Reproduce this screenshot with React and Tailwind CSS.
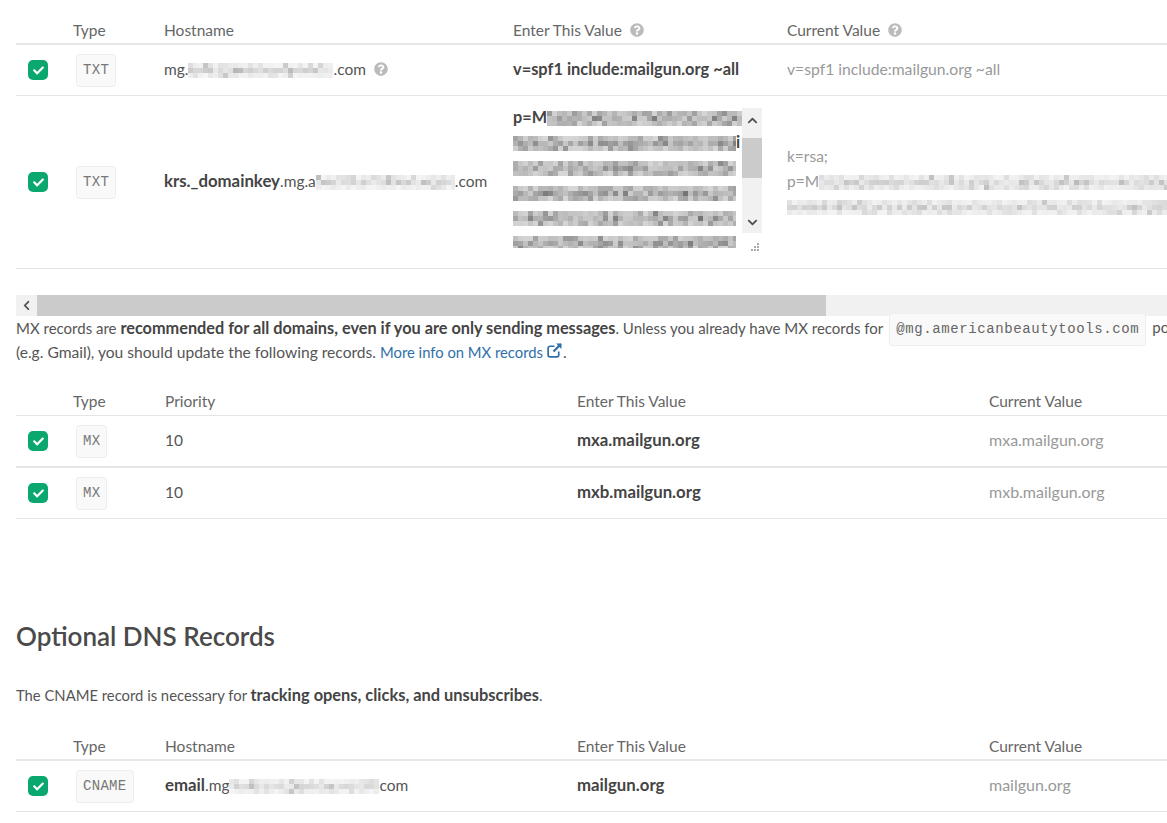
import React from "react";
import { FaCheck, FaQuestionCircle, FaChevronUp, FaChevronDown, FaChevronLeft } from "react-icons/fa";

function rng(seed) {
  let s = seed;
  return () => {
    s = (s * 16807) % 2147483647;
    return s / 2147483647;
  };
}

function Redact({ w, h = 15, seed = 7, min = 180, max = 240, cell = 5, edge = 0.5, className = "" }) {
  const r = rng(seed * 997 + 13);
  const cells = [];
  for (let y = 0; y < h; y += cell) {
    const mid = y === cell;
    for (let x = 0; x < w; x += cell) {
      const base = min + (max - min) * Math.sqrt(r());
      const spot = r() > 0.88;
      const v = Math.round(mid || spot ? base : 255 - (255 - base) * edge);
      cells.push(<rect key={x + "-" + y} x={x} y={y} width={cell} height={cell} fill={`rgb(${v},${v},${v})`} />);
    }
  }
  return (
    <svg width={w} height={h} className={"inline-block align-[-3px] blur-[0.6px] " + className}>
      {cells}
    </svg>
  );
}

function Check() {
  return (
    <span className="flex h-5 w-5 items-center justify-center rounded-[5px] bg-[#0aa86f] text-white">
      <FaCheck className="h-[11px] w-[11px]" />
    </span>
  );
}

function Badge({ children }) {
  return (
    <span className="ml-[3px] inline-flex h-[33px] items-center rounded-[3px] border border-[#eeeeee] bg-[#f9f9f9] px-[6px] font-['Liberation_Mono',monospace] text-[14px] tracking-[0.3px] text-[#777777]">
      {children}
    </span>
  );
}

function Help({ className = "ml-2" }) {
  return <FaQuestionCircle className={"inline-block h-[14px] w-[14px] align-[-1px] text-[#bbbbbb] " + className} />;
}

function ExternalIcon() {
  return (
    <svg viewBox="0 0 16 16" className="ml-[3px] inline-block h-[17px] w-[17px] align-[-1px]" fill="none" stroke="#2f6fa8" strokeWidth="1.6">
      <path d="M12 9v3.2a1.8 1.8 0 0 1-1.8 1.8H3.8A1.8 1.8 0 0 1 2 12.200V5.800A1.800 1.800 0 0 1 3.800 4H8" />
      <path d="M7 9l7-7" strokeWidth="2" />
      <path d="M9.500 1.500h5v5z" fill="#2f6fa8" stroke="none" />
    </svg>
  );
}

const cols5a = "grid grid-cols-[57px_91px_349px_274px_1fr]";
const cols5b = "grid grid-cols-[57px_92px_412px_412px_1fr]";
const bold = "font-bold text-[16.3px] text-[#444444]";
const boldCell = "font-bold text-[16.8px] text-[#444444]";

function Head({ cols, labels, heavy, h = "h-[45px]" }) {
  return (
    <div className={`${cols} ${h} items-end text-[#666666] ${heavy ? "border-b-2 border-[#e8e8e8]" : "border-b border-[#e5e5e5] pb-px"}`}>
      <span />
      {labels.map((l, i) => (
        <span key={i} className="whitespace-nowrap">{l}</span>
      ))}
    </div>
  );
}

function Row({ cols, cells, height = "h-[51px]", thick }) {
  return (
    <div className={`${cols} ${height} items-center ${thick ? "border-b-2 border-[#e5e5e5]" : "border-b border-[#e5e5e5]"}`}>
      {cells.map((c, i) => (
        <div key={i} className={i === 0 ? "pl-[12px]" : i === 1 ? "" : "pb-[2px]"}>{c}</div>
      ))}
    </div>
  );
}

function KeyBox() {
  const rows = [11, 23, 35, 47, 59];
  return (
    <div className="-mb-[2px] flex h-[148px] items-start">
      <div className="h-[140px] w-[229px] overflow-hidden">
        <div className={"-mt-1 leading-[25px] " + bold}>
          <div className="h-[25px] whitespace-nowrap">
            p=M<Redact w={196} seed={3} min={115} max={205} edge={0.8} />
          </div>
          {rows.map((s, i) => (
            <div key={s} className="h-[25px] whitespace-nowrap">
              <Redact w={223} seed={s} min={115} max={205} edge={0.8} />
              {i === 0 ? <span>i</span> : null}
            </div>
          ))}
        </div>
      </div>
      <div className="flex w-5 flex-col">
        <div className="flex h-[125px] w-5 flex-col items-center bg-[#f1f1f1] text-[#505050]">
          <div className="flex h-[30px] w-full items-center justify-center pb-[6px]">
            <FaChevronUp className="h-[11px] w-[11px]" />
          </div>
          <div className="h-[40px] w-full bg-[#cbcbcb]" />
          <div className="flex flex-1 items-end justify-center pb-[5px]">
            <FaChevronDown className="h-[11px] w-[11px]" />
          </div>
        </div>
        <svg width="12" height="10" className="mt-[10px] ml-[7px]" fill="#aaaaaa">
          <rect x="8" y="0" width="2" height="2" />
          <rect x="5" y="3" width="2" height="2" />
          <rect x="8" y="3" width="2" height="2" />
          <rect x="2" y="6" width="2" height="2" />
          <rect x="5" y="6" width="2" height="2" />
          <rect x="8" y="6" width="2" height="2" />
        </svg>
      </div>
    </div>
  );
}

export default function App() {
  return (
    <div className="h-[823px] w-full overflow-hidden bg-white pl-4 font-['Lato','Liberation_Sans',sans-serif] text-[15.5px] leading-[25px] text-[#555555]">
      <Head cols={cols5a} heavy labels={["Type", "Hostname", <>Enter This Value<Help /></>, <>Current Value<Help /></>]} />
      <Row
        cols={cols5a}
        cells={[
          <Check />,
          <Badge>TXT</Badge>,
          <span className="whitespace-nowrap">mg.<Redact w={145} seed={5} min={175} max={235} />.com<Help /></span>,
          <b className="text-[16.4px] font-bold text-[#444444]">v=spf1 include:mailgun.org ~all</b>,
          <span className="text-[15.7px] text-[#999999]">v=spf1 include:mailgun.org ~all</span>,
        ]}
      />
      <Row
        cols={cols5a}
        height="h-[173px]"
        cells={[
          <Check />,
          <Badge>TXT</Badge>,
          <span className="whitespace-nowrap"><b className={boldCell}>krs._domainkey</b>.mg.a<Redact w={139} seed={9} min={175} max={235} />.com</span>,
          <KeyBox />,
          <div className="whitespace-nowrap text-[#999999]">
            <div>k=rsa;</div>
            <div>p=M<Redact w={360} seed={17} min={180} max={235} edge={0.6} /></div>
            <div><Redact w={380} seed={21} min={185} max={235} edge={0.6} /></div>
          </div>,
        ]}
      />
      <div className="mt-[26px] flex h-[21px] bg-[#f1f1f1] text-[#505050]">
        <div className="flex w-[21px] items-center justify-center">
          <FaChevronLeft className="h-[11px] w-[11px]" />
        </div>
        <div className="w-[789px] bg-[#cbcbcb]" />
      </div>
      <div className="-mt-px whitespace-nowrap">
        <div className="flex h-[25px] items-center text-[15px]">
          <span>MX records are <b className={bold}>recommended for all domains, even if you are only sending messages</b>. Unless you already have MX records for</span>
          <code className="mx-[6px] -mb-[3px] inline-flex h-[33px] items-center rounded-[3px] border border-[#eeeeee] bg-[#f9f9f9] px-[6px] font-['Liberation_Mono',monospace] text-[14px] tracking-[0.6px] text-[#666666]">@mg.americanbeautytools.com</code>
          <span>pointing to another provider</span>
        </div>
        <div className="text-[15.6px]">(e.g. Gmail), you should update the following records. <a className="text-[14.8px] text-[#2f6fa8]">More info on MX records<ExternalIcon /></a>.</div>
      </div>
      <Head cols={cols5b} h="h-[51px]" labels={["Type", "Priority", "Enter This Value", "Current Value"]} />
      <Row cols={cols5b} thick height="h-[52px]" cells={[<Check />, <Badge>MX</Badge>, "10", <b className={boldCell}>mxa.mailgun.org</b>, <span className="text-[16px] text-[#999999]">mxa.mailgun.org</span>]} />
      <Row cols={cols5b} cells={[<Check />, <Badge>MX</Badge>, "10", <b className={boldCell}>mxb.mailgun.org</b>, <span className="text-[16px] text-[#999999]">mxb.mailgun.org</span>]} />
      <h2 className="mt-[99px] text-[26px] leading-[36px] font-semibold text-[#4a4a4a]">Optional DNS Records</h2>
      <p className="mt-[28px] text-[14.8px]">The CNAME record is necessary for <b className="text-[16.4px] font-bold text-[#444444]">tracking opens, clicks, and unsubscribes</b>.</p>
      <Head cols={cols5b} heavy h="h-[53px]" labels={["Type", "Hostname", "Enter This Value", "Current Value"]} />
      <Row
        cols={cols5b}
        cells={[
          <Check />,
          <Badge>CNAME</Badge>,
          <span className="whitespace-nowrap"><b className={boldCell}>email</b>.mg<Redact w={150} seed={29} min={185} max={235} />com</span>,
          <b className={boldCell}>mailgun.org</b>,
          <span className="text-[16px] text-[#999999]">mailgun.org</span>,
        ]}
      />
    </div>
  );
}
